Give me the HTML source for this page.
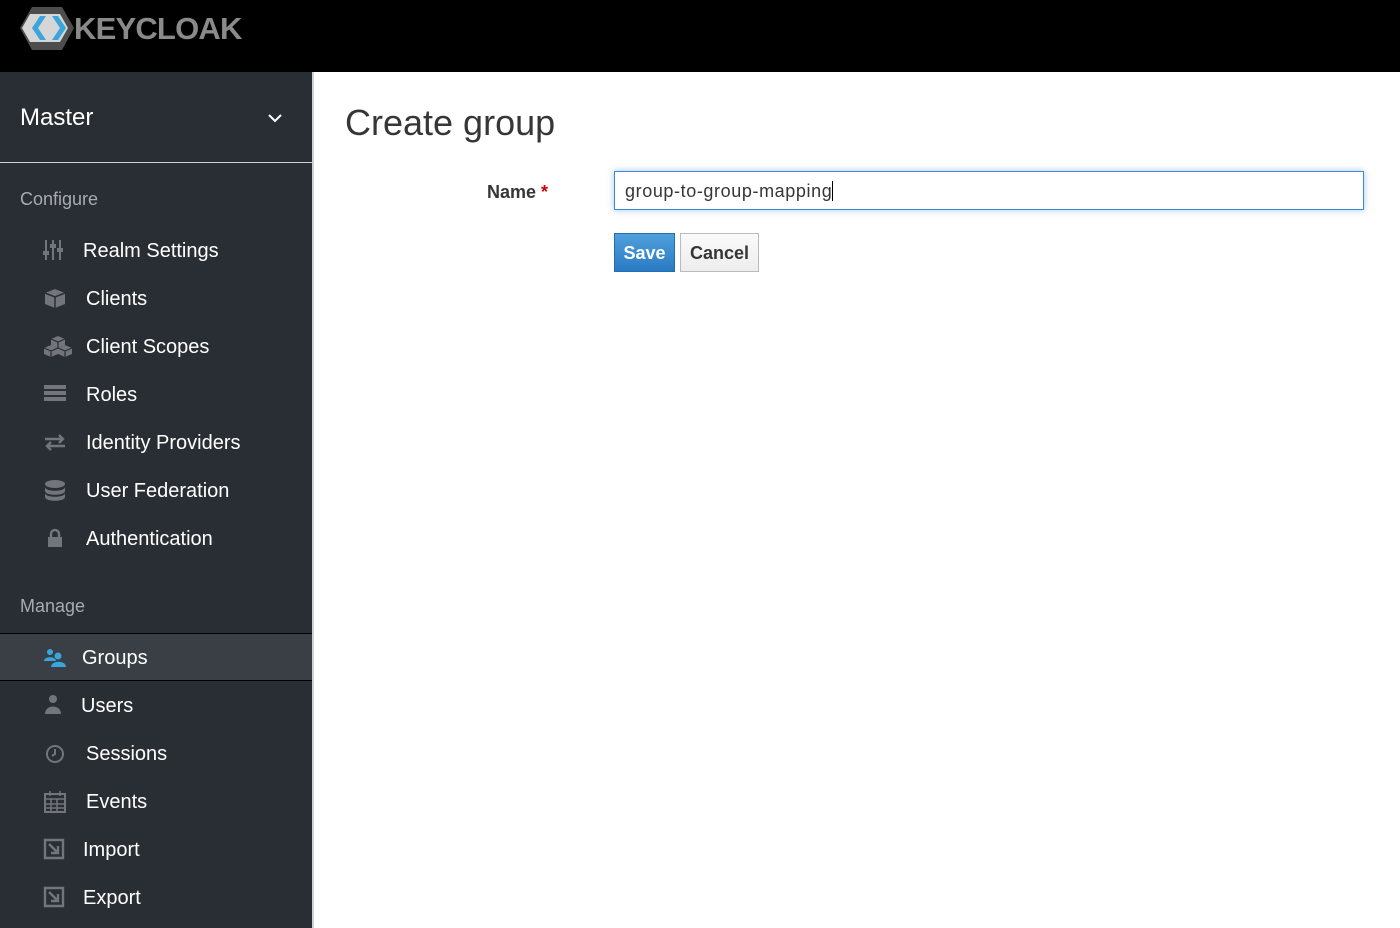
<!DOCTYPE html>
<html><head><meta charset="utf-8"><style>
*{box-sizing:border-box;margin:0;padding:0}
body{width:1400px;height:928px;overflow:hidden;font-family:"Liberation Sans","DejaVu Sans",sans-serif;background:#fff;position:relative}
.top{position:absolute;left:0;top:0;width:1400px;height:72px;background:#000}
.side{position:absolute;left:0;top:72px;width:314px;height:856px;background:#292e34;border-right:2px solid #d1d1d1}
.realm{height:91px;border-bottom:1px solid #d1d1d1;color:#fff;font-size:24px;padding:32px 0 0 20px;position:relative}
.sec{color:#a8abae;font-size:18px;position:absolute;left:20px}
.item{position:absolute;left:0;width:312px;height:48px;color:#fff;font-size:20px;display:flex;align-items:center}
.item svg{position:absolute;left:43px;top:13px}
.item span{position:absolute;left:86px;top:14px}
.act{background:#393f44;border-top:1px solid #000;border-bottom:1px solid #000}
</style></head><body>
<div class="top">
<svg width="60" height="50" viewBox="0 0 60 50" style="position:absolute;left:18px;top:4px">
<polygon points="14,3 44,3 56,24 44,46 14,46 2,24" fill="#4d4d4d"/>
<polygon points="4,24 12,10 42,10 50,24 42,38 12,38" fill="#d6d6d6"/>
<polygon points="22,12 28,12 20,24 28,36 22,36 14,24" fill="#39a5dc"/>
<polygon points="34,12 40,12 48,24 40,36 34,36 42,24" fill="#39a5dc"/>
</svg>
<div style="position:absolute;left:74px;top:11px;color:#8a8a8a;font-size:31px;font-weight:bold;letter-spacing:-0.8px">KEYCLOAK</div>
</div>
<div class="side">
<div class="realm">Master
<svg width="14" height="10" style="position:absolute;left:268px;top:41px"><path d="M1 2l6 6 6-6" stroke="#fff" stroke-width="2" fill="none"/></svg></div>
<div class="sec" style="top:117px">Configure</div>
<div class="item" style="top:154px"><svg width="22" height="22"><g stroke="#72767b" stroke-width="2"><path d="M3 1v20M10 1v20M17 1v20"/></g><g fill="#72767b"><rect x="0" y="12" width="6" height="4"/><rect x="7" y="5" width="6" height="4"/><rect x="14" y="9" width="6" height="4"/></g></svg><span style="left:83px">Realm Settings</span></div>
<div class="item" style="top:202px"><svg width="24" height="22"><path d="M12 2l10 4v11l-10 4-10-4V6z" fill="#72767b"/><path d="M2 6l10 4 10-4M12 10v11" stroke="#292e34" stroke-width="1.5" fill="none"/></svg><span>Clients</span></div>
<div class="item" style="top:250px"><svg width="30" height="24"><g fill="#72767b"><path d="M15 1l7 3v6l-7 3-7-3V4z"/><path d="M8 10l7 3v6l-7 3-7-3v-6z"/><path d="M22 10l7 3v6l-7 3-7-3v-6z"/></g><path d="M8 4l7 3 7-3M1 13l7 3 7-3 7 3 7-3M8 16v6M22 16v6M15 7v6" stroke="#292e34" stroke-width="1.2" fill="none"/></svg><span>Client Scopes</span></div>
<div class="item" style="top:298px"><svg width="24" height="22"><g fill="#72767b"><rect x="1" y="2" width="22" height="4"/><rect x="1" y="8" width="22" height="4"/><rect x="1" y="14" width="22" height="4"/></g></svg><span>Roles</span></div>
<div class="item" style="top:346px"><svg width="24" height="22"><path d="M2 8h18M16 4l4 4-4 4M22 15H4M8 11l-4 4 4 4" stroke="#72767b" stroke-width="2.4" fill="none"/></svg><span>Identity Providers</span></div>
<div class="item" style="top:394px"><svg width="24" height="24"><g fill="#72767b"><ellipse cx="12" cy="5" rx="10" ry="4"/><path d="M2 8c0 5 20 5 20 0v4c0 5-20 5-20 0z"/><path d="M2 14c0 5 20 5 20 0v4c0 5-20 5-20 0z"/></g></svg><span>User Federation</span></div>
<div class="item" style="top:442px"><svg width="24" height="22"><path d="M8 10V7a4 4 0 018 0v3" stroke="#72767b" stroke-width="2.5" fill="none"/><rect x="5" y="10" width="14" height="10" fill="#72767b"/></svg><span>Authentication</span></div>
<div class="sec" style="top:524px">Manage</div>
<div class="item act" style="top:561px"><svg width="24" height="22"><g fill="#39a5dc"><circle cx="7" cy="5" r="3"/><path d="M1 14c0-5 12-5 12 0z"/><circle cx="15" cy="9" r="3.5"/><path d="M8 20c0-7 15-7 15 0z"/></g></svg><span style="left:82px;top:13px">Groups</span></div>
<div class="item" style="top:609px"><svg width="24" height="22"><g fill="#72767b"><circle cx="10" cy="5" r="4"/><path d="M2 20c0-10 16-10 16 0z"/></g></svg><span style="left:81px">Users</span></div>
<div class="item" style="top:657px"><svg width="24" height="24"><circle cx="12" cy="12" r="8" stroke="#72767b" stroke-width="2" fill="none"/><path d="M12 7v5l-3 2" stroke="#72767b" stroke-width="2" fill="none"/></svg><span>Sessions</span></div>
<div class="item" style="top:705px"><svg width="24" height="24"><rect x="2" y="4" width="20" height="18" stroke="#72767b" stroke-width="2" fill="none"/><path d="M2 9h20M7 1v5M17 1v5M2 14h20M2 18h20M8 9v13M14 9v13" stroke="#72767b" stroke-width="1.5"/></svg><span>Events</span></div>
<div class="item" style="top:753px"><svg width="24" height="22"><path d="M2 2h18v18H2z" stroke="#72767b" stroke-width="2.4" fill="none"/><path d="M6 6l9 9M8 15h7V8" stroke="#72767b" stroke-width="2.4" fill="none"/></svg><span style="left:83px">Import</span></div>
<div class="item" style="top:801px"><svg width="24" height="22"><path d="M2 2h18v18H2z" stroke="#72767b" stroke-width="2.4" fill="none"/><path d="M6 6l9 9M15 8v7H8" stroke="#72767b" stroke-width="2.4" fill="none"/></svg><span style="left:83px">Export</span></div>
</div>
<div style="position:absolute;left:345px;top:102px;font-size:36px;color:#363636;font-weight:300">Create group</div>
<div style="position:absolute;left:487px;top:182px;font-size:18px;font-weight:bold;color:#363636">Name <span style="color:#c00">*</span></div>
<div style="position:absolute;left:614px;top:171px;width:750px;height:39px;border:1px solid #3f8ad6;box-shadow:0 0 6px rgba(66,139,202,.5);font-size:18px;color:#363636;padding:9px 0 0 10px;letter-spacing:0.6px">group-to-group-mapping<span style="border-left:1px solid #000;margin-left:0"></span></div>
<div style="position:absolute;left:614px;top:233px;width:61px;height:39px;background:linear-gradient(#4fa0dc,#2b7bc4);border:1px solid #1f6fb2;color:#fff;font-weight:bold;font-size:18px;text-align:center;line-height:38px">Save</div>
<div style="position:absolute;left:680px;top:233px;width:79px;height:39px;background:linear-gradient(#fafafa,#ededed);border:1px solid #bbb;color:#363636;font-weight:bold;font-size:18px;text-align:center;line-height:38px">Cancel</div>
</body></html>
